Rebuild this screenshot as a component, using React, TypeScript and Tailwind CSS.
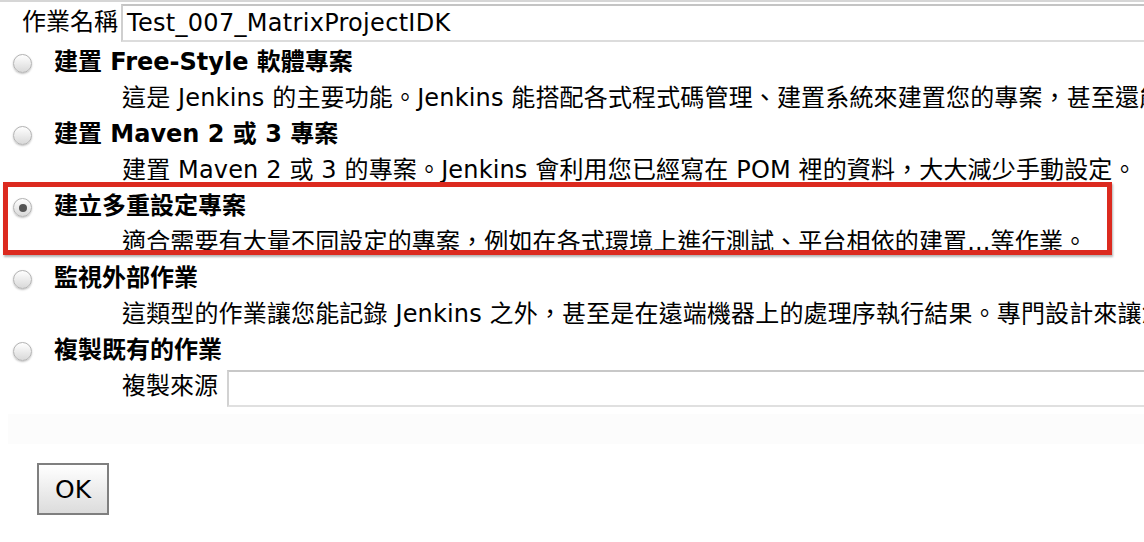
import React from "react";

const FONT = "font-['DejaVu_Sans','Noto_Sans_CJK_TC',sans-serif]";

function Radio({ checked = false }: { checked?: boolean }) {
  return (
    <span className="ml-[13px] mt-[3px] flex h-[19px] w-[19px] shrink-0 items-center justify-center rounded-full border border-[#b3b3b3] bg-gradient-to-b from-[#ffffff] to-[#d9d9d9] shadow-[0_1px_2px_rgba(0,0,0,0.25)]">
      {checked && <span className="h-[8px] w-[8px] rounded-full bg-[#555]" />}
    </span>
  );
}

function TitleRow({ children, checked = false }: { children: React.ReactNode; checked?: boolean }) {
  return (
    <div className="flex h-[36px] items-center">
      <Radio checked={checked} />
      <div className="ml-[22px] whitespace-nowrap text-[24px] font-semibold leading-none">{children}</div>
    </div>
  );
}

function DescRow({ children }: { children: React.ReactNode }) {
  return (
    <div className="flex h-[36px] items-center whitespace-nowrap pl-[122px] text-[24px] leading-none tracking-[0.15px]">
      {children}
    </div>
  );
}

export default function App() {
  return (
    <div className={`relative h-[542px] w-[1144px] overflow-hidden bg-white text-black ${FONT}`}>
      <div className="h-[2px] w-full bg-[#d6d6d6]" />
      <div className="flex h-[42px] items-center">
        <span className="ml-[22px] mr-[3px] mb-[2px] whitespace-nowrap text-[24px] leading-none">作業名稱</span>
        <div className="flex h-[38px] w-[1100px] shrink-0 items-center border-2 border-t-[#c4c4c4] border-l-[#cfcfcf] border-r-[#dcdcdc] border-b-[#dcdcdc] pl-[4px] text-[24px] leading-none tracking-[0.3px]">
          Test_007_MatrixProjectIDK
        </div>
      </div>

      <TitleRow>
        建置 <span className="font-bold">Free-Style</span> 軟體專案
      </TitleRow>
      <DescRow>
        這是 Jenkins 的主要功能。Jenkins 能搭配各式程式碼管理、建置系統來建置您的專案，甚至還能做軟體建置以外的其他事情。
      </DescRow>

      <TitleRow>
        建置 <span className="font-bold">Maven 2</span> 或 <span className="font-bold">3</span> 專案
      </TitleRow>
      <DescRow>建置 Maven 2 或 3 的專案。Jenkins 會利用您已經寫在 POM 裡的資料，大大減少手動設定。</DescRow>

      <TitleRow checked>建立多重設定專案</TitleRow>
      <DescRow>適合需要有大量不同設定的專案，例如在各式環境上進行測試、平台相依的建置...等作業。</DescRow>

      <TitleRow>監視外部作業</TitleRow>
      <DescRow>
        這類型的作業讓您能記錄 Jenkins 之外，甚至是在遠端機器上的處理序執行結果。專門設計來讓您將 Jenkins 當做現有自動化系統的儀表板。
      </DescRow>

      <TitleRow>複製既有的作業</TitleRow>
      <div className="flex h-[40px] items-center">
        <span className="ml-[122px] mr-[9px] mb-[4px] whitespace-nowrap text-[24px] leading-none">複製來源</span>
        <div className="h-[37px] w-[1000px] shrink-0 border-2 border-t-[#c8c8c8] border-l-[#d2d2d2] border-r-[#e0e0e0] border-b-[#e0e0e0]" />
      </div>

      <div className="ml-[8px] mt-[6px] h-[30px] bg-[#fcfcfc]" />

      <div className="mt-[19px] pl-[37px]">
        <button className="flex h-[52px] w-[72px] items-center justify-center border-2 border-[#7f7f7f] bg-gradient-to-b from-[#ffffff] to-[#dcdcdc] text-[25px] leading-none text-black">
          OK
        </button>
      </div>

      <div className="pointer-events-none absolute left-[3px] top-[182px] h-[73px] w-[1109px] border-[5px] border-[#dc2a1f] shadow-[1px_2px_2px_rgba(0,0,0,0.3)]" />
    </div>
  );
}
